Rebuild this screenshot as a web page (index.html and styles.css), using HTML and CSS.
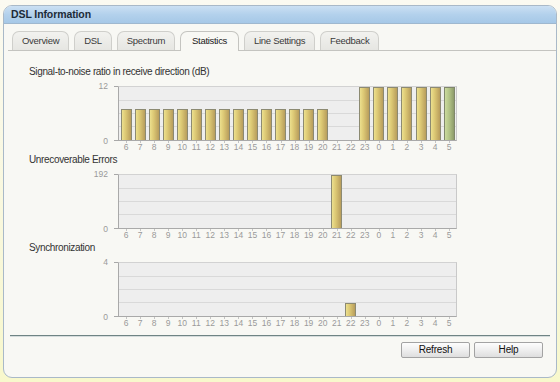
FILE: index.html
```html
<!DOCTYPE html>
<html>
<head>
<meta charset="utf-8">
<link rel="stylesheet" href="styles.css">
</head>
<body>
<div class="panel">
  <div class="titlebar">DSL Information</div>
  <div class="tabs">
    <div class="tab">Overview</div>
    <div class="tab">DSL</div>
    <div class="tab">Spectrum</div>
    <div class="tab active">Statistics</div>
    <div class="tab">Line Settings</div>
    <div class="tab">Feedback</div>
  </div>
  <div class="charts">
    <div class="chart">
      <div class="chart-title">Signal-to-noise ratio in receive direction (dB)</div>
      <div class="chart-row">
        <div class="yaxis"><span>12</span><span>0</span></div>
        <div class="plot">
          <div class="col"><div class="bar" style="height:58.3%"></div></div>
          <div class="col"><div class="bar" style="height:58.3%"></div></div>
          <div class="col"><div class="bar" style="height:58.3%"></div></div>
          <div class="col"><div class="bar" style="height:58.3%"></div></div>
          <div class="col"><div class="bar" style="height:58.3%"></div></div>
          <div class="col"><div class="bar" style="height:58.3%"></div></div>
          <div class="col"><div class="bar" style="height:58.3%"></div></div>
          <div class="col"><div class="bar" style="height:58.3%"></div></div>
          <div class="col"><div class="bar" style="height:58.3%"></div></div>
          <div class="col"><div class="bar" style="height:58.3%"></div></div>
          <div class="col"><div class="bar" style="height:58.3%"></div></div>
          <div class="col"><div class="bar" style="height:58.3%"></div></div>
          <div class="col"><div class="bar" style="height:58.3%"></div></div>
          <div class="col"><div class="bar" style="height:58.3%"></div></div>
          <div class="col"><div class="bar" style="height:58.3%"></div></div>
          <div class="col"></div>
          <div class="col"></div>
          <div class="col"><div class="bar" style="height:100%"></div></div>
          <div class="col"><div class="bar" style="height:100%"></div></div>
          <div class="col"><div class="bar" style="height:100%"></div></div>
          <div class="col"><div class="bar" style="height:100%"></div></div>
          <div class="col"><div class="bar" style="height:100%"></div></div>
          <div class="col"><div class="bar" style="height:100%"></div></div>
          <div class="col"><div class="bar current" style="height:100%"></div></div>
        </div>
      </div>
      <div class="xaxis">
        <span>6</span><span>7</span><span>8</span><span>9</span><span>10</span><span>11</span><span>12</span><span>13</span><span>14</span><span>15</span><span>16</span><span>17</span><span>18</span><span>19</span><span>20</span><span>21</span><span>22</span><span>23</span><span>0</span><span>1</span><span>2</span><span>3</span><span>4</span><span>5</span>
      </div>
    </div>

    <div class="chart">
      <div class="chart-title">Unrecoverable Errors</div>
      <div class="chart-row">
        <div class="yaxis"><span>192</span><span>0</span></div>
        <div class="plot">
          <div class="col"></div><div class="col"></div><div class="col"></div><div class="col"></div>
          <div class="col"></div><div class="col"></div><div class="col"></div><div class="col"></div>
          <div class="col"></div><div class="col"></div><div class="col"></div><div class="col"></div>
          <div class="col"></div><div class="col"></div><div class="col"></div>
          <div class="col"><div class="bar" style="height:100%"></div></div>
          <div class="col"></div><div class="col"></div><div class="col"></div><div class="col"></div>
          <div class="col"></div><div class="col"></div><div class="col"></div><div class="col"></div>
        </div>
      </div>
      <div class="xaxis">
        <span>6</span><span>7</span><span>8</span><span>9</span><span>10</span><span>11</span><span>12</span><span>13</span><span>14</span><span>15</span><span>16</span><span>17</span><span>18</span><span>19</span><span>20</span><span>21</span><span>22</span><span>23</span><span>0</span><span>1</span><span>2</span><span>3</span><span>4</span><span>5</span>
      </div>
    </div>

    <div class="chart">
      <div class="chart-title">Synchronization</div>
      <div class="chart-row">
        <div class="yaxis"><span>4</span><span>0</span></div>
        <div class="plot">
          <div class="col"></div><div class="col"></div><div class="col"></div><div class="col"></div>
          <div class="col"></div><div class="col"></div><div class="col"></div><div class="col"></div>
          <div class="col"></div><div class="col"></div><div class="col"></div><div class="col"></div>
          <div class="col"></div><div class="col"></div><div class="col"></div><div class="col"></div>
          <div class="col"><div class="bar" style="height:25%"></div></div>
          <div class="col"></div><div class="col"></div><div class="col"></div>
          <div class="col"></div><div class="col"></div><div class="col"></div><div class="col"></div>
        </div>
      </div>
      <div class="xaxis">
        <span>6</span><span>7</span><span>8</span><span>9</span><span>10</span><span>11</span><span>12</span><span>13</span><span>14</span><span>15</span><span>16</span><span>17</span><span>18</span><span>19</span><span>20</span><span>21</span><span>22</span><span>23</span><span>0</span><span>1</span><span>2</span><span>3</span><span>4</span><span>5</span>
      </div>
    </div>
  </div>
  <div class="separator"></div>
  <div class="buttons">
    <button class="btn">Refresh</button>
    <button class="btn">Help</button>
  </div>
</div>
</body>
</html>
```

FILE: styles.css
```css
html, body {
  margin: 0;
  padding: 0;
}
body {
  width: 560px;
  height: 382px;
  overflow: hidden;
  background: linear-gradient(to bottom, #fbfaf1 0%, #f9f8dc 60%, #f8f8cc 100%);
  font-family: "Liberation Sans", Arial, sans-serif;
  color: #222;
}
.panel {
  box-sizing: border-box;
  margin: 5px 0 0 3px;
  width: 554px;
  height: 373px;
  border: 1px solid #a9b9c8;
  border-radius: 9px;
  background: #f8f8f4;
  overflow: hidden;
}
.titlebar {
  height: 17px;
  line-height: 17px;
  padding-left: 7px;
  background: linear-gradient(to bottom, #cbe0f3 0%, #b3d1ec 50%, #a6c8e7 100%);
  border-bottom: 1px solid #9fb8cf;
  font-size: 10.5px;
  font-weight: bold;
  color: #1d2b38;
  letter-spacing: -0.1px;
}
.tabs {
  display: flex;
  gap: 5px;
  margin: 7px 0 0 4px;
  padding-left: 4px;
  border-bottom: 1px solid #c4c4c0;
  height: 19px;
}
.tab {
  box-sizing: border-box;
  height: 19px;
  line-height: 18px;
  padding: 0 9px;
  font-size: 9.5px;
  letter-spacing: -0.3px;
  color: #3a3a3a;
  border: 1px solid #cfcfcb;
  border-bottom: none;
  border-radius: 7px 7px 0 0;
  background: linear-gradient(to bottom, #f2f2ef 0%, #e6e6e2 100%);
}
.tab.active {
  height: 20px;
  padding: 0 11px;
  background: #f8f8f4;
  border-color: #c4c4c0;
  color: #1a1a1a;
}
.charts {
  padding: 15px 0 0 25px;
}
.chart {
  height: 88px;
}
.chart-title {
  height: 12px;
  line-height: 12px;
  font-size: 10px;
  letter-spacing: -0.35px;
  color: #333;
  margin-bottom: 8px;
}
.chart-row {
  display: flex;
  height: 55px;
}
.yaxis {
  box-sizing: border-box;
  width: 89px;
  display: flex;
  flex-direction: column;
  justify-content: space-between;
  align-items: flex-end;
  padding-right: 10px;
  margin: -5px 0;
  height: 65px;
  font-size: 8.5px;
  line-height: 10px;
  color: #9a9a9a;
  position: relative;
}
.yaxis::before,
.yaxis::after {
  content: "";
  position: absolute;
  right: 0;
  width: 4px;
  height: 1px;
  background: #a8a8a8;
}
.yaxis::before { top: 5px; }
.yaxis::after { bottom: 5px; }
.plot {
  box-sizing: border-box;
  width: 339px;
  height: 55px;
  display: flex;
  align-items: stretch;
  border-top: 1px solid #d2d2d2;
  border-right: 1px solid #c9c9c9;
  border-left: 1px solid #a9a9a9;
  border-bottom: 1px solid #a9a9a9;
  background-color: #eeeeee;
  background-image:
    linear-gradient(#d9d9d9, #d9d9d9),
    linear-gradient(#d9d9d9, #d9d9d9),
    linear-gradient(#d9d9d9, #d9d9d9);
  background-size: 100% 1px;
  background-repeat: no-repeat;
  background-position: 0 25%, 0 50%, 0 75%;
}
.col {
  flex: 1;
  display: flex;
  align-items: flex-end;
  justify-content: center;
}
.bar {
  box-sizing: border-box;
  width: 11px;
  border: 1px solid #8c8a72;
  border-bottom: none;
  background: linear-gradient(to right, #ece08e 0%, #dcc874 40%, #b89d5c 100%);
}
.bar.current {
  border-color: #80876c;
  background: linear-gradient(to right, #cbdb9e 0%, #b3c487 45%, #8d9b6a 100%);
}
.xaxis {
  display: flex;
  margin-left: 90px;
  width: 337px;
  height: 13px;
  font-size: 8.5px;
  line-height: 13px;
  color: #9a9a9a;
}
.xaxis span {
  flex: 1;
  text-align: center;
  position: relative;
}
.xaxis span::before {
  content: "";
  position: absolute;
  left: 50%;
  top: 0;
  width: 1px;
  height: 2px;
  background: #c4c4c4;
}
.separator {
  margin: 5px 6px 0 6px;
  height: 1px;
  background: #6f8484;
  box-shadow: 0 1px 0 #d5dcdc;
}
.buttons {
  display: flex;
  justify-content: flex-end;
  gap: 4px;
  padding: 6px 13px 0 0;
}
.btn {
  box-sizing: border-box;
  width: 69px;
  height: 16px;
  padding: 0;
  margin: 0;
  font-family: "Liberation Sans", Arial, sans-serif;
  font-size: 10px;
  letter-spacing: -0.2px;
  line-height: 14px;
  color: #111;
  border: 1px solid #a3a3a3;
  border-radius: 2px;
  background: linear-gradient(to bottom, #fdfdfd 0%, #efefef 50%, #dedede 100%);
}
```
